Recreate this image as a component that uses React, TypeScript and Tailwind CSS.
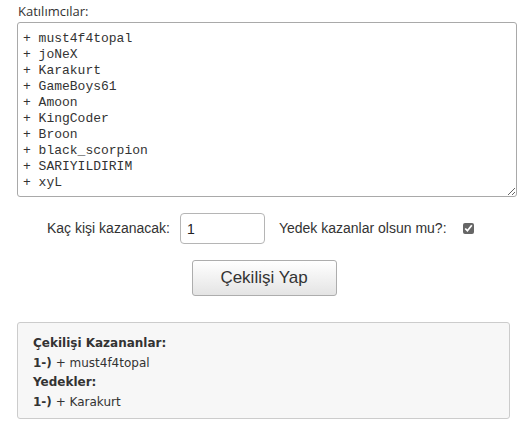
import { useState } from "react"

const participants = [
  "must4f4topal",
  "joNeX",
  "Karakurt",
  "GameBoys61",
  "Amoon",
  "KingCoder",
  "Broon",
  "black_scorpion",
  "SARIYILDIRIM",
  "xyL",
]

export default function App() {
  const [list, setList] = useState(participants.map((p) => "+ " + p).join("\n"))
  const [count, setCount] = useState("1")
  const [backups, setBackups] = useState(true)

  return (
    <div className="w-[529px] h-[432px] bg-white text-[#333] font-['Open_Sans',sans-serif]">
      <div className="pl-[17px] pr-[12px] pt-[2px]">
        <label htmlFor="participants" className="block text-[13px] leading-[18px] pl-px mb-[2px]">
          Katılımcılar:
        </label>
        <textarea
          id="participants"
          value={list}
          onChange={(e) => setList(e.target.value)}
          className="block w-[500px] h-[175px] border border-[#a9a9a9] rounded-[3px] px-[5px] pt-[8px] font-['Liberation_Mono',monospace] text-[13px] leading-[16px] text-[#333] outline-none resize"
        />
      </div>

      <div className="flex items-center pl-[47px] mt-[16px] h-[31px] font-['Liberation_Sans',Arial,sans-serif] text-[14px]">
        <span>Kaç kişi kazanacak:</span>
        <input
          type="text"
          value={count}
          onChange={(e) => setCount(e.target.value)}
          className="ml-[10px] w-[85px] h-[31px] border border-[#b5b5b5] rounded-[4px] px-[6px] text-[14px] text-[#222] outline-none"
        />
        <span className="ml-[14px]">Yedek kazanlar olsun mu?:</span>
        <input
          type="checkbox"
          checked={backups}
          onChange={(e) => setBackups(e.target.checked)}
          className="ml-[16px] w-[11px] h-[11px] accent-[#666]"
        />
      </div>

      <div className="flex justify-center mt-[16px]">
        <button className="w-[145px] h-[36px] ml-[-1px] border border-[#adadad] rounded-[3px] bg-gradient-to-b from-white to-[#e4e4e4] text-[17px] text-[#333] font-['Liberation_Sans',Arial,sans-serif]">
          Çekilişi Yap
        </button>
      </div>

      <div className="ml-[17px] mt-[26px] w-[493px] h-[97px] border border-[#ccc] rounded-[3px] bg-[#f7f7f7] px-[15px] pt-[11px] font-['DejaVu_Sans',Verdana,sans-serif] text-[12px] leading-[19.5px] text-[#333]">
        <div className="font-bold">Çekilişi Kazananlar:</div>
        <div>
          <b>1-)</b> + must4f4topal
        </div>
        <div className="font-bold">Yedekler:</div>
        <div>
          <b>1-)</b> + Karakurt
        </div>
      </div>
    </div>
  )
}
